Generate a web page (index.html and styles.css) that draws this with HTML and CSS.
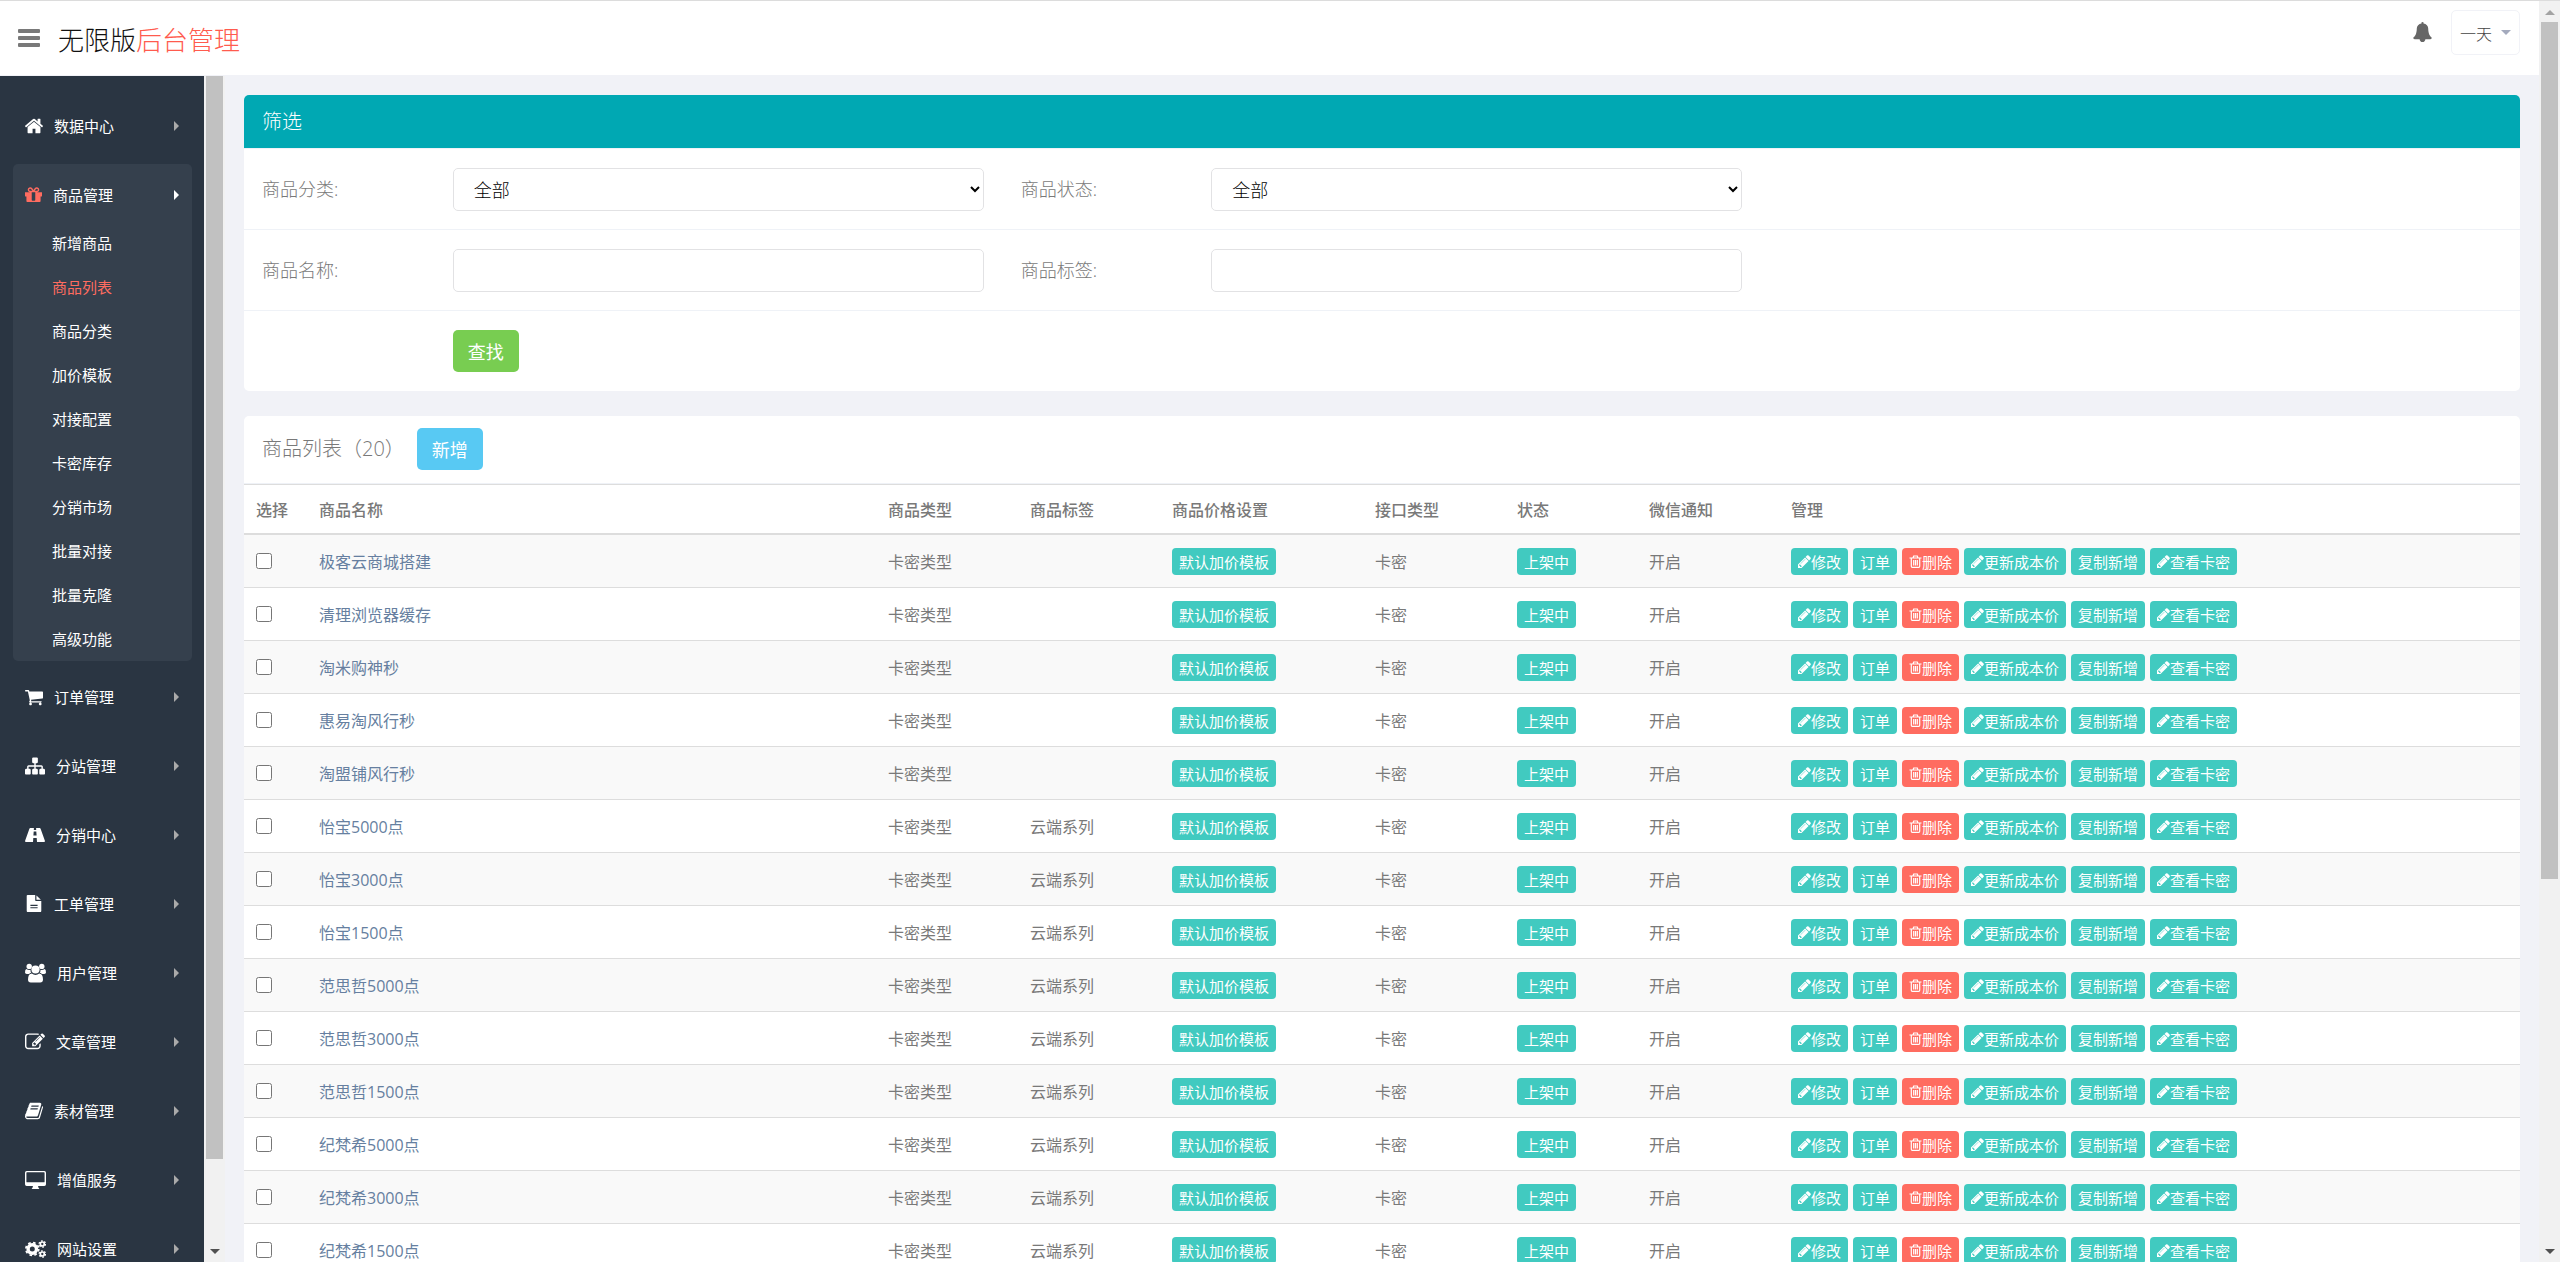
FILE: index.html
```html
<!DOCTYPE html>
<html lang="zh-CN">
<head>
    <meta charset="UTF-8">
    <meta name="viewport" content="width=device-width, initial-scale=1.0">
    <title>后台管理</title>
    <link rel="stylesheet" href="styles.css">
</head>
<body>

    <!-- icons -->
    <svg class="sprite" aria-hidden="true">
        <symbol id="i-home" viewBox="90 0 1612 1792"><path d="M1472 992v480q0 26-19 45t-45 19h-384v-384h-256v384h-384q-26 0-45-19t-19-45v-480q0-1 .5-3t.5-3l575-474 575 474q1 2 1 6zm223-69l-62 74q-8 9-21 11h-3q-13 0-21-7l-692-577-692 577q-12 8-24 7-13-2-21-11l-62-74q-8-10-7-23.5t11-21.5l719-599q32-26 76-26t76 26l244 204v-195q0-14 9-23t23-9h192q14 0 23 9t9 23v408l219 182q10 8 11 21.5t-7 23.5z"/></symbol>
        <symbol id="i-gift" viewBox="128 0 1536 1792"><path d="M1056 1356v-716h-320v716q0 25 18 38.5t46 13.5h192q28 0 46-13.5t18-38.5zm-456-844h195l-126-161q-26-31-69-31-40 0-68 28t-28 68 28 68 68 28zm688-96q0-40-28-68t-68-28q-43 0-69 31l-125 161h194q40 0 68-28t28-68zm376 256v320q0 14-9 23t-23 9h-96v416q0 40-28 68t-68 28h-1088q-40 0-68-28t-28-68v-416h-96q-14 0-23-9t-9-23v-320q0-14 9-23t23-9h440q-93 0-158.5-65.5t-65.5-158.5 65.5-158.5 158.5-65.5q107 0 168 77l128 165 128-165q61-77 168-77 93 0 158.5 65.5t65.5 158.5-65.5 158.5-158.5 65.5h440q14 0 23 9t9 23z"/></symbol>
        <symbol id="i-cart" viewBox="64 0 1664 1792"><path d="M704 1536q0 52-38 90t-90 38-90-38-38-90 38-90 90-38 90 38 38 90zm896 0q0 52-38 90t-90 38-90-38-38-90 38-90 90-38 90 38 38 90zm128-1088v512q0 24-16.5 42.5t-40.5 21.5l-1044 122q13 60 13 70 0 16-24 64h920q26 0 45 19t19 45-19 45-45 19h-1024q-26 0-45-19t-19-45q0-11 8-31.5t16-36 21.5-40 15.5-29.5l-177-823h-204q-26 0-45-19t-19-45 19-45 45-19h256q16 0 28.5 6.5t19.5 15.5 13 24.5 8 26 5.5 29.5 4.5 26h1201q26 0 45 19t19 45z"/></symbol>
        <symbol id="i-sitemap" viewBox="0 0 1792 1792"><path d="M1792 1248v320q0 40-28 68t-68 28h-320q-40 0-68-28t-28-68v-320q0-40 28-68t68-28h96v-192h-512v192h96q40 0 68 28t28 68v320q0 40-28 68t-68 28h-320q-40 0-68-28t-28-68v-320q0-40 28-68t68-28h96v-192h-512v192h96q40 0 68 28t28 68v320q0 40-28 68t-68 28h-320q-40 0-68-28t-28-68v-320q0-40 28-68t68-28h96v-192q0-52 38-90t90-38h512v-192h-96q-40 0-68-28t-28-68v-320q0-40 28-68t68-28h320q40 0 68 28t28 68v320q0 40-28 68t-68 28h-96v192h512q52 0 90 38t38 90v192h96q40 0 68 28t28 68z"/></symbol>
        <symbol id="i-road" viewBox="0 0 20 20"><path fill-rule="evenodd" d="M5.3 3H8.9L8.8 5H11.2L11.1 3H14.7Q15.3 3 15.6 3.7L19.8 15.6Q20.2 17 19.2 17H12L11.7 13H8.3L8 17H.8Q-.2 17 .2 15.6L4.4 3.7Q4.7 3 5.3 3ZM8.7 6.5L8.4 10.5H11.6L11.3 6.5Z"/></symbol>
        <symbol id="i-file" viewBox="128 0 1536 1792"><path d="M1596 476q14 14 28 36h-472v-472q22 14 36 28zm-476 164h544v1056q0 40-28 68t-68 28h-1344q-40 0-68-28t-28-68v-1600q0-40 28-68t68-28h800v544q0 40 28 68t68 28zm160 736v-64q0-14-9-23t-23-9h-704q-14 0-23 9t-9 23v64q0 14 9 23t23 9h704q14 0 23-9t9-23zm0-256v-64q0-14-9-23t-23-9h-704q-14 0-23 9t-9 23v64q0 14 9 23t23 9h704q14 0 23-9t9-23z"/></symbol>
        <symbol id="i-users" viewBox="0 0 21 20"><circle cx="4.2" cy="3.4" r="2.7"/><circle cx="16.8" cy="3.4" r="2.7"/><path d="M1.4 6Q0 6.400 0 9.500Q0 10.900 1.800 10.900H4.200Q4.900 9.900 6.300 9.800Q5.300 8.600 5.500 6.800Q3.200 7.200 1.400 6ZM19.600 6Q21 6.400 21 9.500Q21 10.900 19.200 10.900H16.800Q16.100 9.900 14.700 9.800Q15.700 8.600 15.500 6.800Q17.800 7.200 19.600 6Z"/><circle cx="10.500" cy="6.500" r="4.100"/><path d="M6.800 10.500Q8.500 11.900 10.500 11.900T14.200 10.500Q17.900 10.500 18 16.500Q18 19.500 15.200 19.500H5.800Q3 19.500 3 16.500Q3.100 10.500 6.800 10.500Z"/></symbol>
        <symbol id="i-edit" viewBox="0 0 1792 1792"><path d="M888 1184l116-116-152-152-116 116v56h96v96h56zm440-720q-16-16-33 1l-350 350q-17 17-1 33t33-1l350-350q17-17 1-33zm80 594v190q0 119-84.500 203.500t-203.500 84.500h-832q-119 0-203.500-84.500t-84.500-203.500v-832q0-119 84.500-203.500t203.500-84.500h832q63 0 117 25 15 7 18 23 3 17-9 29l-49 49q-14 14-32 8-23-6-45-6h-832q-66 0-113 47t-47 113v832q0 66 47 113t113 47h832q66 0 113-47t47-113v-126q0-13 9-22l64-64q15-15 35-7t20 29zm-96-738l288 288-672 672h-288v-288zm444 132l-92 92-288-288 92-92q28-28 68-28t68 28l152 152q28 28 28 68t-28 68z"/></symbol>
        <symbol id="i-book" viewBox="64 0 1664 1792"><path d="M1703 478q40 57 18 129l-275 906q-19 64-76.500 107.500t-122.500 43.500h-923q-77 0-148.500-53.500t-99.500-131.500q-24-67-2-127 0-4 3-27t4-37q1-8-3-21.500t-3-19.500q2-11 8-21t16.500-23.500 16.500-23.500q23-38 45-91.500t30-91.500q3-10 .5-30t-.5-28q3-11 17-28t17-23q21-36 42-92t25-90q1-9-2.500-32t.5-28q4-13 22-30.500t22-22.500q19-26 42.500-84.500t27.500-96.500q1-8-3-25.500t-2-26.500q2-8 9-18t18-23 17-21q8-12 16.500-30.500t15-35 16-36 19.500-32 26.500-23.500 36-11.500 47.500 5.500l-1 3q38-9 51-9h761q74 0 114 56t18 130l-274 906q-36 119-71.500 153.500t-128.500 34.500h-869q-27 0-38 15-11 16-1 43 24 70 144 70h923q29 0 56-15.500t35-41.500l300-987q7-22 5-57 38 15 59 43zm-1064 2q-4 13 2 22.500t20 9.500h608q13 0 25.500-9.500t16.500-22.500l21-64q4-13-2-22.500t-20-9.500h-608q-13 0-25.500 9.500t-16.500 22.500zm-83 256q-4 13 2 22.500t20 9.500h608q13 0 25.500-9.500t16.500-22.500l21-64q4-13-2-22.500t-20-9.500h-608q-13 0-25.500 9.500t-16.500 22.500z"/></symbol>
        <symbol id="i-desktop" viewBox="0 0 21 20"><path fill-rule="evenodd" d="M1.700 1H19.300Q21 1 21 2.700V14.300Q21 16 19.300 16H13L13.600 18Q14.300 18.300 14.300 19H6.700Q6.700 18.300 7.400 18L8 16H1.700Q0 16 0 14.300V2.700Q0 1 1.700 1ZM2 2.300Q1.400 2.300 1.400 2.900V11.700Q1.400 12.300 2 12.300H19Q19.600 12.300 19.600 11.700V2.900Q19.600 2.300 19 2.300Z"/></symbol>
        <symbol id="i-cogs" viewBox="0 0 21 20"><g fill="none" stroke="currentColor"><circle cx="7.300" cy="10" r="4.200" stroke-width="3.400"/><circle cx="7.300" cy="10" r="6.400" stroke-width="1.800" stroke-dasharray="2.600 2.427"/><circle cx="17.300" cy="5" r="2" stroke-width="1.700"/><circle cx="17.300" cy="5" r="3.200" stroke-width="1.300" stroke-dasharray="1.700 1.651"/><circle cx="17.300" cy="15" r="2" stroke-width="1.700"/><circle cx="17.300" cy="15" r="3.200" stroke-width="1.300" stroke-dasharray="1.700 1.651"/></g></symbol>
        <symbol id="i-bell" viewBox="64 0 1664 1792"><path d="M1728 1408q0 52-38 90t-90 38h-448q0 106-75 181t-181 75-181-75-75-181h-448q-52 0-90-38t-38-90q50-42 91-88t85-119.500 74.500-158.500 50-206 19.500-260q0-152 117-282.500t307-158.500q-8-19-8-39 0-40 28-68t68-28 68 28 28 68q0 20-8 39 190 28 307 158.500t117 282.500q0 139 19.500 260t50 206 74.500 158.500 85 119.500 91 88z"/></symbol>
        <symbol id="i-pencil" viewBox="128 128 1536 1536"><path d="M491 1536l91-91-235-235-91 91v107h128v128h107zm523-928q0-22-22-22-10 0-17 7l-542 542q-7 7-7 17 0 22 22 22 10 0 17-7l542-542q7-7 7-17zm-54-192l416 416-832 832h-416v-416zm683 96q0 53-37 90l-166 166-416-416 166-165q36-38 90-38 53 0 91 38l235 234q37 39 37 91z"/></symbol>
        <symbol id="i-trash" viewBox="0 0 13 13"><path fill="none" stroke="currentColor" stroke-width="1.200" d="M.5 3H12.500M4 3L4.700 1H8.300L9 3M2.300 3V11.300Q2.300 12.400 3.300 12.400H9.700Q10.700 12.400 10.700 11.300V3M4.700 5V10.500M6.500 5V10.500M8.300 5V10.500"/></symbol>
        <symbol id="i-bars" viewBox="0 0 22 18"><rect width="22" height="4" rx="1"/><rect y="7" width="22" height="4" rx="1"/><rect y="14" width="22" height="4" rx="1"/></symbol>
    </svg>

    <div class="window">
        <div class="app">
            <header class="header">
                <button class="toggle" type="button" aria-label="菜单"><svg><use href="#i-bars"/></svg></button>
                <a class="logo" href="#">无限版<span>后台管理</span></a>
                <div class="top-nav">
                    <a class="bell" href="#" aria-label="通知"><svg><use href="#i-bell"/></svg></a>
                    <button class="user" type="button">一天<span class="caret"></span></button>
                </div>
            </header>

            <div class="body">
                <nav class="sidebar">
                    <ul class="menu">
                        <li><a href="#"><svg class="w18"><use href="#i-home"/></svg>数据中心</a></li>
                        <li class="open">
                            <a href="#"><svg class="w17"><use href="#i-gift"/></svg>商品管理</a>
                            <ul class="sub">
                                <li><a href="#">新增商品</a></li>
                                <li class="current"><a href="#">商品列表</a></li>
                                <li><a href="#">商品分类</a></li>
                                <li><a href="#">加价模板</a></li>
                                <li><a href="#">对接配置</a></li>
                                <li><a href="#">卡密库存</a></li>
                                <li><a href="#">分销市场</a></li>
                                <li><a href="#">批量对接</a></li>
                                <li><a href="#">批量克隆</a></li>
                                <li><a href="#">高级功能</a></li>
                            </ul>
                        </li>
                        <li><a href="#"><svg class="w18"><use href="#i-cart"/></svg>订单管理</a></li>
                        <li><a href="#"><svg class="w20"><use href="#i-sitemap"/></svg>分站管理</a></li>
                        <li><a href="#"><svg class="w20"><use href="#i-road"/></svg>分销中心</a></li>
                        <li><a href="#"><svg class="w18 file"><use href="#i-file"/></svg>工单管理</a></li>
                        <li><a href="#"><svg class="w21"><use href="#i-users"/></svg>用户管理</a></li>
                        <li><a href="#"><svg class="w20"><use href="#i-edit"/></svg>文章管理</a></li>
                        <li><a href="#"><svg class="w18"><use href="#i-book"/></svg>素材管理</a></li>
                        <li><a href="#"><svg class="w21"><use href="#i-desktop"/></svg>增值服务</a></li>
                        <li><a href="#"><svg class="w21"><use href="#i-cogs"/></svg>网站设置</a></li>
                    </ul>
                </nav>
                <div class="scrollbar side-scroll"><div class="thumb"></div><span class="down"></span></div>

                <main class="main">
                    <section class="panel">
                        <h2 class="panel-title teal">筛选</h2>
                        <form class="filter">
                            <div class="form-row">
                                <label for="category">商品分类:</label>
                                <div class="field"><select id="category"><option>全部</option></select></div>
                                <label for="status">商品状态:</label>
                                <div class="field"><select id="status"><option>全部</option></select></div>
                            </div>
                            <div class="form-row">
                                <label for="name">商品名称:</label>
                                <div class="field"><input type="text" id="name"></div>
                                <label for="tag">商品标签:</label>
                                <div class="field"><input type="text" id="tag"></div>
                            </div>
                            <div class="form-row">
                                <div class="field submit"><button class="btn green" type="button">查找</button></div>
                            </div>
                        </form>
                    </section>

                    <section class="panel">
                        <div class="list-head">
                            <h2>商品列表（20）</h2>
                            <button class="btn blue" type="button">新增</button>
                        </div>
                        <table>
                            <colgroup>
                                <col class="c-check"><col class="c-name"><col class="c-type"><col class="c-type"><col class="c-price"><col class="c-type"><col class="c-status"><col class="c-type"><col>
                            </colgroup>
                            <thead>
                                <tr>
                                    <th>选择</th>
                                    <th>商品名称</th>
                                    <th>商品类型</th>
                                    <th>商品标签</th>
                                    <th>商品价格设置</th>
                                    <th>接口类型</th>
                                    <th>状态</th>
                                    <th>微信通知</th>
                                    <th>管理</th>
                                </tr>
                            </thead>
                            <tbody id="goods-list"></tbody>
                        </table>
                    </section>
                </main>
            </div>
        </div>
        <div class="scrollbar page-scroll"><span class="up"></span><div class="thumb"></div><span class="down"></span></div>
    </div>

    <script>
        let goods = [
            ["极客云商城搭建", ""],
            ["清理浏览器缓存", ""],
            ["淘米购神秒", ""],
            ["惠易淘风行秒", ""],
            ["淘盟铺风行秒", ""],
            ["怡宝5000点", "云端系列"],
            ["怡宝3000点", "云端系列"],
            ["怡宝1500点", "云端系列"],
            ["范思哲5000点", "云端系列"],
            ["范思哲3000点", "云端系列"],
            ["范思哲1500点", "云端系列"],
            ["纪梵希5000点", "云端系列"],
            ["纪梵希3000点", "云端系列"],
            ["纪梵希1500点", "云端系列"]
        ];

        let pencil = '<svg><use href="#i-pencil"/></svg>';
        let trash = '<svg><use href="#i-trash"/></svg>';

        document.getElementById("goods-list").innerHTML = goods.map(([name, tag]) => `<tr>
            <td><input type="checkbox" aria-label="${name}"></td>
            <td><a href="#">${name}</a></td>
            <td>卡密类型</td>
            <td>${tag}</td>
            <td><button class="tag" type="button">默认加价模板</button></td>
            <td>卡密</td>
            <td><button class="tag" type="button">上架中</button></td>
            <td>开启</td>
            <td><div class="actions">
                <button class="tag" type="button">${pencil}修改</button>
                <button class="tag" type="button">订单</button>
                <button class="tag red" type="button">${trash}删除</button>
                <button class="tag" type="button">${pencil}更新成本价</button>
                <button class="tag" type="button">复制新增</button>
                <button class="tag" type="button">${pencil}查看卡密</button>
            </div></td>
        </tr>`).join("");
    </script>

</body>
</html>
```
FILE: styles.css
```css
* {
    box-sizing: border-box;
}
body {
    margin: 0;
    font-family: "Open Sans", "Noto Sans CJK SC", sans-serif;
    font-size: 16px;
    color: #797979;
    background: #f1f2f7;
}
ul {
    list-style: none;
    margin: 0;
    padding: 0;
}
a {
    text-decoration: none;
}
button, input, select {
    font-family: inherit;
    margin: 0;
}
svg {
    display: block;
    fill: currentColor;
    flex: none;
}
.sprite {
    position: absolute;
    width: 0;
    height: 0;
}
.window {
    display: flex;
    height: 100vh;
    overflow: hidden;
    border-top: 1px solid #dcdcdc;
}
.app {
    flex: 1;
    min-width: 0;
    display: flex;
    flex-direction: column;
}

/* header */
.header {
    flex: none;
    display: flex;
    align-items: flex-start;
    height: 75px;
    padding: 0 19px 0 18px;
    background: #fff;
    border-bottom: 1px solid #f1f2f7;
}
.toggle {
    padding: 0;
    margin-top: 28px;
    border: 0;
    background: none;
    color: #797979;
}
.toggle svg {
    width: 22px;
    height: 18px;
}
.logo {
    margin: 19px 0 0 18px;
    font-size: 26px;
    line-height: 40px;
    font-weight: 300;
    color: #111;
}
.logo span {
    color: #ff5b4e;
}
.top-nav {
    display: flex;
    align-items: flex-start;
    margin: 9px 0 0 auto;
}
.bell {
    margin: 12px 19px 0 0;
    color: #666;
}
.bell svg {
    width: 19px;
    height: 20px;
}
.user {
    display: flex;
    align-items: center;
    gap: 9px;
    height: 45px;
    padding: 0 8px;
    border: 1px solid #f1f2f7;
    border-radius: 5px;
    background: #fff;
    color: #444;
    font-size: 16px;
    font-weight: 300;
}
.caret {
    border: 5px solid transparent;
    border-top-color: #a4aabd;
    border-bottom: 0;
}

/* sidebar */
.body {
    flex: 1;
    min-height: 0;
    display: flex;
}
.sidebar {
    flex: none;
    width: 204px;
    padding: 19px 12px 0 13px;
    overflow: hidden;
    background: #2a3542;
}
.menu > li {
    margin-bottom: 8px;
}
.menu > li > a {
    display: flex;
    align-items: center;
    height: 61px;
    padding: 0 13px 0 12px;
    color: #fff;
    font-size: 15px;
}
.menu > li > a svg {
    height: 20px;
    margin-right: 11px;
}
.menu > li > a::after {
    content: "";
    margin-left: auto;
    border: 5px solid transparent;
    border-left-color: #aaa;
    border-right: 0;
}
.menu .w17 { width: 17px; }
.menu .w18 { width: 18px; }
.menu .w20 { width: 20px; }
.menu .w21 { width: 21px; }
.menu > li > a .file {
    height: 17px;
}
.menu > .open {
    margin-bottom: 5px;
    background: #35404d;
    border-radius: 5px;
}
.menu > .open > a svg {
    color: #ff6c60;
}
.menu > .open > a::after {
    border-left-color: #fff;
}
.sub {
    margin-top: -4px;
}
.sub a {
    display: block;
    padding-left: 39px;
    line-height: 44px;
    font-size: 15px;
    color: #fff;
}
.sub .current a {
    color: #ff6c60;
}

/* scrollbars */
.scrollbar {
    flex: none;
    display: flex;
    flex-direction: column;
    align-items: center;
    width: 21px;
    background: #f1f1f1;
}
.scrollbar .thumb {
    width: 17px;
    background: #c1c1c1;
}
.side-scroll .thumb {
    height: 91.3%;
}
.page-scroll .thumb {
    height: 68%;
}
.up, .down {
    border: 5px solid transparent;
}
.up {
    margin: 9px 0 7px;
    border-bottom-color: #a3a3a3;
    border-top: 0;
}
.down {
    margin: auto 0 8px;
    border-top-color: #505050;
    border-bottom: 0;
}

/* panels */
.main {
    flex: 1;
    min-width: 0;
    padding: 19px;
    overflow: hidden;
}
.panel {
    margin-bottom: 25px;
    background: #fff;
    border-radius: 5px;
    overflow: hidden;
}
.panel-title {
    margin: 0;
    padding: 0 18px;
    font-size: 20px;
    font-weight: 300;
    line-height: 53px;
    border-bottom: 1px solid #eff2f7;
}
.teal {
    background: #00a8b3;
    color: #fff;
}
.form-row {
    display: grid;
    grid-template-columns: repeat(12, 1fr);
    padding: 19px 0 18px;
    border-bottom: 1px solid #eff2f7;
}
.form-row:last-child {
    padding-bottom: 19px;
    border-bottom: 0;
}
.form-row label {
    padding-left: 18px;
    font-size: 18px;
    font-weight: 300;
    line-height: 43px;
}
.field {
    grid-column: span 3;
    padding: 0 19px;
}
.field.submit {
    grid-column: 2 / span 3;
}
.field input, .field select {
    display: block;
    width: 100%;
    height: 43px;
    padding: 0 16px;
    border: 1px solid #e2e2e4;
    border-radius: 5px;
    background: #fff;
    color: #000;
    font-size: 18px;
    font-weight: 300;
}
.btn {
    height: 42px;
    padding: 0 15px;
    border: 0;
    border-radius: 5px;
    color: #fff;
    font-size: 18px;
}
.green {
    background: #78cd51;
}
.blue {
    background: #58c9f3;
}

/* goods table */
.list-head {
    display: flex;
    align-items: center;
    gap: 12px;
    padding: 12px 18px 13px;
    border-bottom: 1px solid #eff2f7;
}
.list-head h2 {
    margin: 0;
    font-size: 20px;
    font-weight: 300;
    line-height: 38px;
}
table {
    width: 100%;
    table-layout: fixed;
    border-collapse: separate;
    border-spacing: 0;
}
.c-check { width: 63px; }
.c-name { width: 25%; }
.c-type { width: 142px; }
.c-price { width: 203px; }
.c-status { width: 132px; }
th, td {
    padding: 0 12px;
    text-align: left;
    border-top: 1px solid #ddd;
}
th {
    height: 49px;
    font-weight: 500;
}
td {
    height: 53px;
}
tbody tr:first-child td {
    height: 54px;
    border-top-width: 2px;
}
tbody tr:nth-child(odd) {
    background: #f9f9f9;
}
td a {
    color: #667fa0;
}
td input {
    display: block;
    width: 16px;
    height: 16px;
}
.actions {
    display: flex;
    gap: 5px;
}
.tag {
    display: flex;
    align-items: center;
    height: 27px;
    padding: 0 7px;
    border: 0;
    border-radius: 4px;
    background: #41cac0;
    color: #fff;
    font-size: 15px;
    white-space: nowrap;
}
.tag svg {
    width: 13px;
    height: 13px;
}
.tag.red {
    background: #ff6c60;
}
```
